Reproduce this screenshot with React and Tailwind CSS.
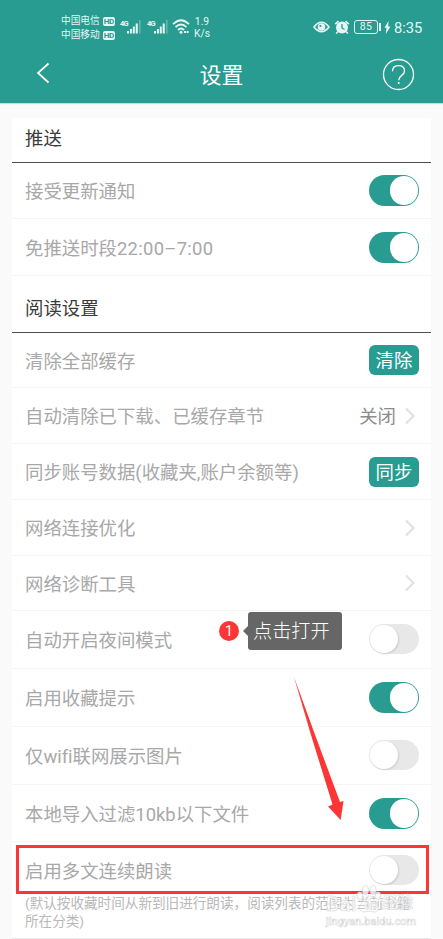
import React from "react";
import clsx from "clsx";

const readingRows = [
    { label: "清除全部缓存", height: "h-[55px]", type: "button", text: "清除" },
    { label: "自动清除已下载、已缓存章节", height: "h-14", type: "link", text: "关闭" },
    { label: "同步账号数据(收藏夹,账户余额等)", height: "h-14", type: "button", text: "同步" },
    { label: "网络连接优化", height: "h-14", type: "link" },
    { label: "网络诊断工具", height: "h-[55px]", type: "link" },
    { label: "自动开启夜间模式", height: "h-[58px]", type: "switch", on: false },
    { label: "启用收藏提示", height: "h-[58px]", type: "switch", on: true },
    { label: "仅wifi联网展示图片", height: "h-[58px]", type: "switch", on: false },
    { label: "本地导入过滤10kb以下文件", height: "h-[57px]", type: "switch", on: true },
];

function Switch({ on }) {
    return (
        <div className={clsx("flex w-[50px] shrink-0 items-center rounded-full", on ? "h-[31px] justify-end bg-[#289c90] pr-px" : "mb-px h-[30px] bg-[#e8e8e8] pl-px")}>
            <div className={clsx("rounded-full bg-white", on ? "h-[29px] w-7" : "size-7 shadow-[1px_1px_2px_rgba(0,0,0,0.12)]")} />
        </div>
    );
}

function ChevronRight() {
    return (
        <svg width="10" height="18" viewBox="0 0 10 18" fill="none" stroke="#e2e2e2" strokeWidth="2.2">
            <path d="M1 1.5 8.5 9 1 16.5" />
        </svg>
    );
}

function Row({ label, height, type, text, on }) {
    return (
        <div className={clsx("flex items-center justify-between border-b border-[#f5f5f5] pr-3 pl-[13px]", height)}>
            <span className="whitespace-nowrap pt-[3px] text-[18.4px] leading-6 text-[#a8a8a8] [font-variant-ligatures:none]">{label}</span>
            {type === "switch" && <Switch on={on} />}
            {type === "button" && (
                <button className="h-[30px] w-[50px] rounded-md bg-[#289c90] text-[18.4px] leading-[31px] text-white">{text}</button>
            )}
            {type === "link" && (
                <div className="flex items-center gap-[9px] pr-1">
                    {text && <span className="pt-[3px] text-[18.4px] leading-6 text-[#8c8c8c]">{text}</span>}
                    <ChevronRight />
                </div>
            )}
        </div>
    );
}

function SectionTitle({ children, className }) {
    return (
        <h2 className={clsx("flex border-b border-[#4d4d4d] pl-[13px] text-[18.4px] leading-6 text-[#3a3a3a]", className)}>{children}</h2>
    );
}

function Signal() {
    return (
        <div className="flex w-[22px]">
            <span className="w-[7px] text-[7.5px] font-bold leading-[7px] tracking-[-0.7px]">4G</span>
            <svg width="15" height="14" viewBox="0 0 15 14" fill="#e6f6f4">
                <path d="M0 11h2v2.500H0zM2.900 9h2v4.500h-2zM5.800 6.500h2v7h-2zM8.700 3.500h2.100v10H8.700z" />
                <path d="M12 0h1.600v13.500H12z" opacity=".3" />
            </svg>
        </div>
    );
}

function Carrier({ name }) {
    return (
        <div className="flex h-[14px] items-center gap-[3px]">
            <span className="text-[9.7px] leading-[14px]">{name}</span>
            <span className="h-[9px] w-3 rounded-[2px] bg-[#e6f6f4] text-center text-[8px] font-bold leading-[9px] tracking-[-0.3px] text-[#289c90]">HD</span>
        </div>
    );
}

function StatusBar() {
    return (
        <div className="flex h-[46px] items-start justify-between pr-[21px] pl-[61px] text-[#e6f6f4]">
            <div className="flex">
                <div className="w-[54px] pt-[14px]">
                    <Carrier name="中国电信" />
                    <Carrier name="中国移动" />
                </div>
                <div className="ml-[5px] flex gap-[5px] pt-[20px]">
                    <Signal />
                    <Signal />
                </div>
                <svg className="mt-[19px] ml-[3px]" width="18" height="16" viewBox="0 0 18 16" fill="none" stroke="#e6f6f4" strokeWidth="1.8">
                    <path d="M1 5.200Q9-2.700 17 5.200M3.500 8.200Q9 2.800 14.500 8.200M6 11Q9 8 12 11" />
                    <circle cx="9" cy="13.200" r="1.500" fill="#e6f6f4" stroke="none" />
                    <path d="M12 13h5" strokeWidth="2" strokeDasharray="2 .6" />
                </svg>
                <div className="ml-[4px] pt-[16px] text-center text-[10.3px] leading-[11.5px]">
                    <div>1.9</div>
                    <div>K/s</div>
                </div>
            </div>
            <div className="flex h-[54px] items-center">
                <svg width="17" height="12" viewBox="0 0 17 12">
                    <path d="M1 6Q8.500-3.500 16 6 8.500 15.500 1 6Z" fill="none" stroke="#e6f6f4" strokeWidth="1.700" />
                    <circle cx="8.500" cy="6" r="3.800" fill="#e6f6f4" />
                    <circle cx="7.400" cy="5" r="1.100" fill="#289c90" />
                </svg>
                <svg className="ml-[4px]" width="16" height="15" viewBox="0 0 16 15">
                    <circle cx="8" cy="7.500" r="6" fill="#e6f6f4" />
                    <path d="M1.200 4.200 4.500 1.200M11.500 1.200l3.300 3M4 11.500l-1.800 2M12 11.500l1.800 2" stroke="#e6f6f4" strokeWidth="1.600" />
                    <path d="M8 4v4l2.500 1.500" fill="none" stroke="#289c90" strokeWidth="1.300" />
                </svg>
                <div className="ml-[4px] flex h-[14px] w-6 items-center justify-center rounded-[3px] border border-[#e6f6f4] pt-px text-[10.5px] leading-none tracking-[0.3px]">85</div>
                <div className="ml-px h-2 w-[2px] bg-[#e6f6f4]" />
                <svg className="ml-[3px]" width="7" height="13" viewBox="0 0 7 13" fill="#e6f6f4">
                    <path d="M4.500 0 .5 6.800h2L1.800 13 6.500 5.500H4.200z" />
                </svg>
                <span className="ml-[3px] w-[28px] whitespace-nowrap pt-[2px] text-[14.7px] leading-[18px]">8:35</span>
            </div>
        </div>
    );
}

function Header() {
    return (
        <header className="h-[103px] bg-[#289c90] shadow-[0_1px_1px_rgba(0,0,0,0.15)]">
            <StatusBar />
            <div className="flex h-[57px] items-center justify-between pr-7 pl-9">
                <svg className="-mt-1 mr-[11px]" width="14" height="22" viewBox="0 0 14 22" fill="none" stroke="white" strokeWidth="1.700">
                    <path d="M12.500 1.500 2 11l10.500 9.500" />
                </svg>
                <h1 className="pt-[2px] text-[21.800px] leading-7 text-white">设置</h1>
                <svg width="33" height="33" viewBox="0 0 33 33" fill="none" stroke="white" strokeWidth="1.300">
                    <circle cx="16.500" cy="16.500" r="15" />
                    <path d="M10.500 13.200c0-3.500 2.500-5.500 6-5.500s6 2 6 5.200c0 4.600-5.800 4.400-5.800 9.300" />
                    <path d="M16.700 24v2" strokeWidth="1.700" />
                </svg>
            </div>
        </header>
    );
}

function Tooltip() {
    return (
        <div className="absolute top-[612px] left-[219px] flex h-[38px] items-center">
            <span className="flex size-5 items-center justify-center rounded-full bg-[#fc3536] text-sm leading-none text-white">1</span>
            <span className="ml-1 border-y-[5px] border-r-[5px] border-y-transparent border-r-[#666]" />
            <span className="h-[38px] w-[94px] rounded-[3px] bg-[#666] pl-[5px] text-[19.200px] leading-[39px] font-light text-white">点击打开</span>
        </div>
    );
}

function Watermark() {
    return (
        <div className="absolute top-[884px] left-[326px] h-[44px] w-[94px] font-bold leading-none text-white/70 [-webkit-text-stroke:0.5px_#d4d4d4]">
            <div className="flex items-center whitespace-nowrap pt-[10px]">
                <span className="w-[38px] text-[20px] tracking-[0.8px]">Bai</span>
                <span className="mt-[2px] w-[18px] text-[12px]">du</span>
                <span className="text-[15.500px]">经验</span>
            </div>
            <svg className="absolute top-0 left-[30px]" width="26" height="30" viewBox="0 0 26 30" fill="white" fillOpacity=".8" stroke="#d9d9d9" strokeWidth=".8">
                <ellipse cx="9.500" cy="6" rx="3" ry="4.500" />
                <ellipse cx="17" cy="6" rx="3" ry="4.500" />
                <ellipse cx="3.800" cy="12" rx="2.800" ry="4" />
                <ellipse cx="22" cy="12" rx="2.800" ry="4" />
                <path fillOpacity=".3" d="M13 12c4 0 5 5 8 8 3 4 1 8-3 8-2 0-3-1-5-1s-3 1-5 1c-4 0-6-4-3-8 3-3 4-8 8-8Z" />
            </svg>
            <div className="mt-[2px] text-[11px] font-medium">jingyan.baidu.com</div>
        </div>
    );
}

function App() {
    return (
        <div className="relative h-[939px] w-[443px] overflow-hidden bg-[#fafafa] font-[Roboto,'Noto_Sans_CJK_SC',sans-serif]">
            <Header />
            <main className="mx-3 mt-[15px] bg-white">
                <SectionTitle className="h-[45px] pt-[9px]">推送</SectionTitle>
                <Row label="接受更新通知" height="h-14" type="switch" on />
                <Row label={<>免推送时段<span className="tracking-[0.3px]">22:00–7:00</span></>} height="h-[57px]" type="switch" on />
                <SectionTitle className="h-[57px] pt-[21px]">阅读设置</SectionTitle>
                {readingRows.map((row) => (
                    <Row key={row.label} {...row} />
                ))}
                <div className="h-[97px] border-b border-[#e8e8e8] pt-[3px]">
                    <div className="mr-[2px] ml-1 flex h-[49px] items-center justify-between border-3 border-[#fc3536] pt-px pr-[7px] pl-[6px]">
                        <span className="pt-[4px] text-[18.4px] leading-6 text-[#a8a8a8]">启用多文连续朗读</span>
                        <Switch on={false} />
                    </div>
                    <p className="pl-[13px] text-[13.600px] leading-[18px] whitespace-nowrap text-[#b8b8b8]">
                        (默认按收藏时间从新到旧进行朗读，阅读列表的范围为当前书籍
                        <br />
                        所在分类)
                    </p>
                </div>
            </main>
            <Tooltip />
            <svg className="absolute top-[676px] left-[292px]" width="54" height="146" viewBox="0 0 54 146" fill="#fc3536">
                <path d="M2 1 22 56 48 126 51.500 125 48.700 144 36 130.500 40.500 128.500 19 59Z" />
            </svg>
            <Watermark />
        </div>
    );
}

export default App;
